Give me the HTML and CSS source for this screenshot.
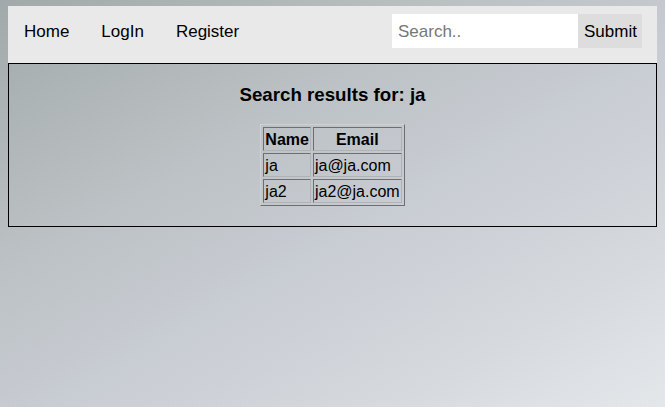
FILE: index.html
```html
<!DOCTYPE html>
<html>
<head>
<meta charset="utf-8">
<link rel="stylesheet" href="styles.css">
</head>
<body>
<div class="topnav">
  <a href="#">Home</a>
  <a href="#">LogIn</a>
  <a href="#">Register</a>
  <form class="search-container">
    <input type="text" placeholder="Search.." name="search">
    <button type="submit">Submit</button>
  </form>
</div>
<div class="content">
  <h3>Search results for: ja</h3>
  <table class="results">
    <tr><th>Name</th><th>Email</th></tr>
    <tr><td>ja</td><td>ja@ja.com</td></tr>
    <tr><td>ja2</td><td>ja2@ja.com</td></tr>
  </table>
</div>
</body>
</html>
```
FILE: styles.css
```css
html {
  min-height: 100%;
  background: linear-gradient(150deg, #a1a9aa 0%, #b9bfc1 30%, #c8ccd3 55%, #d6dade 80%, #e4e7ea 100%);
  background-attachment: fixed;
}
body {
  margin: 6px 8px 8px;
  font-family: "Liberation Sans", Arial, sans-serif;
  color: #000;
}
.topnav {
  display: flex;
  align-items: flex-start;
  height: 57px;
  background: #e9e9e9;
}
.topnav a {
  padding: 16px 16px 12px;
  font-size: 17px;
  line-height: 19.5px;
  color: #000;
  text-decoration: none;
}
.search-container {
  display: flex;
  margin: 8px 15px 0 auto;
}
.search-container input {
  box-sizing: border-box;
  width: 186px;
  height: 34px;
  padding: 7px 6px 5px;
  border: none;
  outline: none;
  font-family: "Liberation Sans", Arial, sans-serif;
  font-size: 17px;
  background: #fff;
  color: #000;
}
.search-container input::placeholder {
  color: #777;
}
.search-container button {
  box-sizing: border-box;
  width: 64px;
  height: 34px;
  padding: 7px 6px 5px;
  border: none;
  background: #ddd;
  font-family: "Liberation Sans", Arial, sans-serif;
  font-size: 17px;
  color: #000;
}
.content {
  border: 1px solid #000;
  padding: 0 0 20px;
}
.content h3 {
  margin: 19.5px 0 18px;
  font-size: 18.72px;
  text-align: center;
}
.results {
  margin: 0 auto;
  font-size: 16px;
  border-collapse: separate;
  border-spacing: 2px;
  border: 1px solid;
  border-color: #cdd0d4 #6e6e6e #6e6e6e #cdd0d4;
}
.results th, .results td {
  padding: 2px 1px 0;
  line-height: 20px;
  border: 1px solid;
  border-color: #6e6e6e #b0b3b6 #b0b3b6 #6e6e6e;
}
.results td {
  text-align: left;
}
```
